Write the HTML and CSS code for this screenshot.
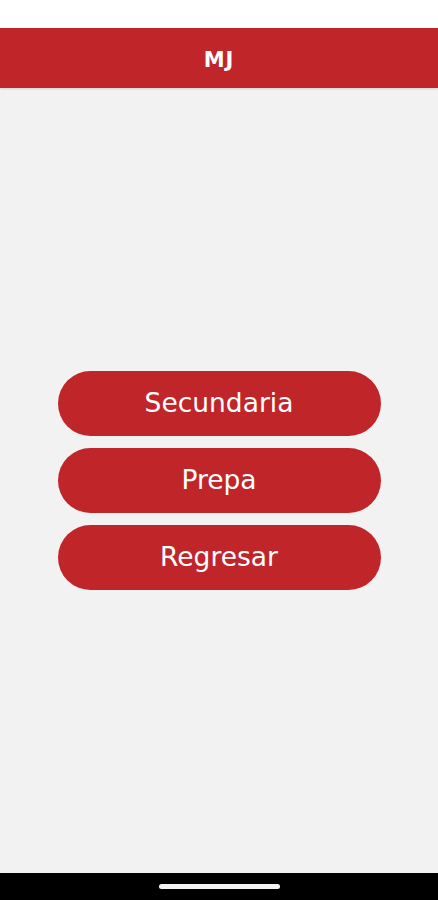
FILE: index.html
```html
<!DOCTYPE html>
<html lang="es">
<head>
    <meta charset="UTF-8">
    <title>MJ</title>
    <link rel="stylesheet" href="styles.css">
</head>
<body>
    <div class="status-bar"></div>

    <div class="header">
        <h1>MJ</h1>
    </div>

    <!-- menu buttons -->
    <div class="menu">
        <button class="menu-btn">Secundaria</button>
        <button class="menu-btn">Prepa</button>
        <button class="menu-btn">Regresar</button>
    </div>

    <div class="nav-bar">
        <span class="home-pill"></span>
    </div>
</body>
</html>
```

FILE: styles.css
```css
html, body {
  margin: 0;
  padding: 0;
}

body {
  background-color: #f2f2f2;
  font-family: "DejaVu Sans", "Open Sans", sans-serif;
  height: 900px;
  display: flex;
  flex-direction: column;
}

.status-bar {
  height: 28px;
  background-color: #ffffff;
}

.header {
  height: 60px;
  padding-top: 3px;
  box-sizing: border-box;
  background-color: #c0252a;   /* brand red */
  color: white;
  display: flex;
  align-items: center;
  justify-content: center;
  box-shadow: 0 1px 2px rgba(0, 0, 0, 0.15);
}

.header h1 {
  margin: 0;
  font-size: 21px;
  font-weight: 700;
  letter-spacing: 1px;
}

.menu {
  flex: 1;
  display: flex;
  flex-direction: column;
  align-items: center;
  justify-content: center;
  gap: 12px;
}

.menu-btn {
  width: 323px;
  height: 65px;
  border: none;
  border-radius: 33px;
  background-color: #c0252a;
  color: white;
  font-family: "DejaVu Sans", "Open Sans", sans-serif;
  font-size: 26.5px;
  font-weight: 400;
  padding: 0 0 3px 0;
}

.nav-bar {
  height: 27px;
  background-color: #000;
  display: flex;
  align-items: center;
  justify-content: center;
}

.home-pill {
  width: 121px;
  height: 5px;
  border-radius: 3px;
  background-color: #f4f4f4;
}
```
